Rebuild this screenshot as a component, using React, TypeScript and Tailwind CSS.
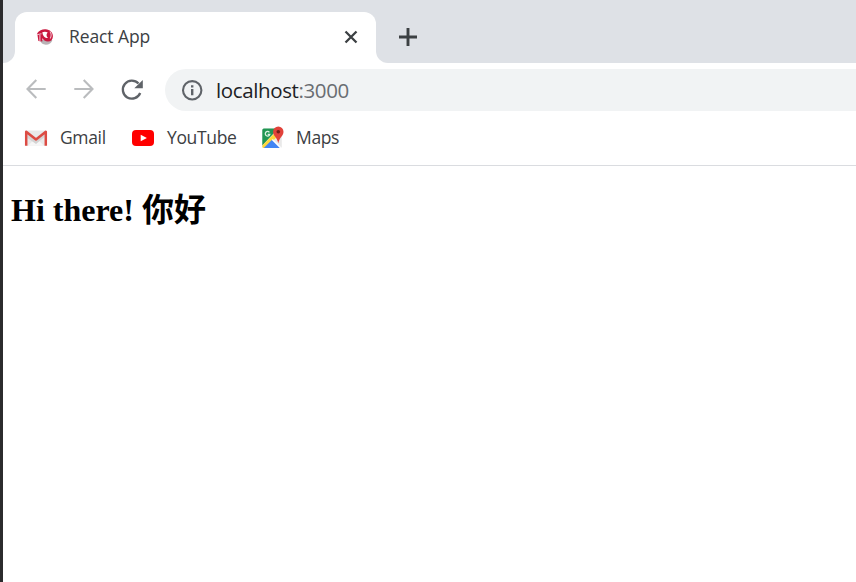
import React from "react";

function TabFavicon() {
  return (
    <svg width="18" height="18" viewBox="0 0 18 18" className="shrink-0">
      <path d="M4 12h12.400c-.8 3-3.400 4.700-6.600 4.700S4.800 14.800 4 12z" fill="#b9b3b6" />
      <path d="M1.200 5.200C3.200 2.600 6.200 1 9.500 1.200c4.500.2 7.500 3.300 7.400 7.300-.1 3-2 5-5 5-2.700 0-4.700-1.200-5.400-3.500L6.300 13.500 2.400 13z" fill="#c9183f" />
      <path d="M6.300 4.300c1.600-.9 3.900-.8 5.400.1-1.500 1.300-1.700 3.800.2 5.300-2.800 1-5.200-1.300-5.600-5.400z" fill="#fff" />
      <path d="M.8 6.800l4.700-1M3.900 7v6M14 3.500c1.400 2 1.500 4.500.2 7" stroke="#f1bcc9" strokeWidth="1.100" fill="none" />
    </svg>
  );
}

function GmailIcon() {
  return (
    <svg width="24" height="24" viewBox="0 0 24 24" className="shrink-0">
      <path d="M2 4.500h20v15.300H2z" fill="#e9e9e9" />
      <path d="M4 19.800l8-8 8 8z" fill="#f7f7f7" />
      <path d="M3.500 7l8.500 8 8.500-8v4L12 18l-8.500-6z" fill="#d4d4d4" />
      <path d="M2.200 19.800V5.700L12 13.500l9.800-7.800v14.100" fill="none" stroke="#dc4b43" strokeWidth="2.500" strokeLinejoin="round" />
    </svg>
  );
}

function YouTubeIcon() {
  return (
    <svg width="24" height="24" viewBox="0 0 24 24" className="shrink-0">
      <rect x="1" y="4" width="22" height="16" rx="4" fill="#ff0000" />
      <path d="M9.700 8.700l6.200 3.300-6.200 3.300z" fill="#fff" />
    </svg>
  );
}

function MapsIcon() {
  return (
    <svg width="24" height="24" viewBox="-0.8 0 24 24" className="shrink-0">
      <defs>
        <clipPath id="map-sheet">
          <rect x="1.500" y="2.500" width="19.500" height="19.500" rx="1.500" />
        </clipPath>
      </defs>
      <g clipPath="url(#map-sheet)">
        <path d="M1 2h21v21H1z" fill="#e9e9e9" />
        <path d="M1 2h17L1 20z" fill="#219653" />
        <path d="M0 21L18 3v6L3 24z" fill="#fdd73b" />
        <path d="M2 23l9.500-9.500L21 23z" fill="#4285f4" />
        <path d="M11.500 13.500L21 23" stroke="#fff" strokeWidth="1.500" />
      </g>
      <path d="M8.600 6.300A2.300 2.300 0 1 0 9 8.400H6.900" fill="none" stroke="#d8f2df" strokeWidth="1.300" />
      <path d="M17.500.5a5.200 5.200 0 0 0-5.200 5.200c0 4.200 4 5.400 5.200 11.500 1.200-6.100 5.200-7.300 5.200-11.500A5.200 5.200 0 0 0 17.500.5z" fill="#e1423a" />
      <circle cx="17.500" cy="5.700" r="1.800" fill="#741d18" />
    </svg>
  );
}

function ArrowLeft() {
  return (
    <svg width="20" height="20" viewBox="0 0 20 20" className="shrink-0" fill="none" stroke="#babcbe" strokeWidth="2.100">
      <path d="M19.700 10H2M10.300 1L1.500 10l8.800 9" />
    </svg>
  );
}

function ArrowRight() {
  return (
    <svg width="20" height="20" viewBox="0 0 20 20" className="shrink-0" fill="none" stroke="#babcbe" strokeWidth="2.100">
      <path d="M.3 10H18M9.700 1l8.800 9-8.800 9" />
    </svg>
  );
}

function Reload() {
  return (
    <svg width="22" height="22" viewBox="0 0 22 22" className="shrink-0">
      <path d="M19.200 14A9 9 0 1 1 17.500 4.600" fill="none" stroke="#5f6368" strokeWidth="2.300" />
      <path d="M21.800 1v8.300h-8.500z" fill="#5f6368" />
    </svg>
  );
}

function Info() {
  return (
    <svg width="22" height="22" viewBox="0 0 22 22" className="shrink-0">
      <circle cx="11.200" cy="11.300" r="9.200" fill="none" stroke="#5f6368" strokeWidth="2.100" />
      <path d="M10 10h2.400v6.200H10zM10 6.200h2.400v2.200H10z" fill="#5f6368" />
    </svg>
  );
}

export default function App() {
  return (
    <div className="flex h-[582px] w-[856px] overflow-hidden bg-white font-['Open_Sans','Noto_Sans',sans-serif]">
      <div className="w-[3px] shrink-0 bg-[#2b2b2d]" />
      <div className="flex min-w-0 flex-1 flex-col">
        <header>
          <div className="h-3 bg-[#dee1e6]" />
          <div className="flex h-[51px]">
            <div className="w-3 rounded-br-[12px] bg-[#dee1e6]" />
            <div className="bg-[linear-gradient(#dee1e6_50%,#fff_50%)]">
              <div className="flex h-full w-[361px] items-center rounded-t-[12px] bg-white pb-[2px] pl-[21px] pr-[18px]">
                <TabFavicon />
                <span className="ml-[15px] whitespace-nowrap text-[17.5px] tracking-[-0.1px] text-[#3c4043]">React App</span>
                <svg width="14" height="14" viewBox="0 0 14 14" className="ml-auto shrink-0">
                  <path d="M1.500 1.500l11 11M12.500 1.500l-11 11" stroke="#3c4043" strokeWidth="2.300" />
                </svg>
              </div>
            </div>
            <div className="flex flex-1 items-center rounded-bl-[12px] bg-[#dee1e6] pb-[2px] pl-[23px]">
              <svg width="18" height="18" viewBox="0 0 18 18">
                <path d="M9 0v18M0 9h18" stroke="#3c4043" strokeWidth="2.900" />
              </svg>
            </div>
          </div>
          <div className="flex h-[54px] items-center pl-[23px]">
            <div className="flex pb-[2px]"><ArrowLeft /></div>
            <div className="ml-7 flex pb-[2px]"><ArrowRight /></div>
            <div className="ml-[27px] flex"><Reload /></div>
            <div className="ml-[22px] flex h-[42px] flex-1 items-center rounded-l-full bg-[#f1f3f4] pl-4">
              <Info />
              <span className="ml-[13px] whitespace-nowrap pt-px text-[20.5px] tracking-[-0.38px] text-[#202124]">
                localhost<span className="text-[#696d72]">:3000</span>
              </span>
            </div>
          </div>
          <nav className="flex h-[49px] items-start border-b border-[#dadce0] pl-[21px] pt-[9px] text-[17.5px] leading-[23px] tracking-[-0.35px] text-[#3c4043]">
            <a className="flex w-[107px] gap-3 whitespace-nowrap"><GmailIcon />Gmail</a>
            <a className="flex w-[129px] gap-3 whitespace-nowrap"><YouTubeIcon />YouTube</a>
            <a className="flex gap-3 whitespace-nowrap"><MapsIcon />Maps</a>
          </nav>
        </header>
        <main className="pl-2 pt-[26px]">
          <h1 className="whitespace-nowrap font-['Liberation_Serif','Noto_Sans_CJK_SC',serif] text-[32px] font-bold leading-[37px] text-black">
            Hi there! 你好
          </h1>
        </main>
      </div>
    </div>
  );
}
